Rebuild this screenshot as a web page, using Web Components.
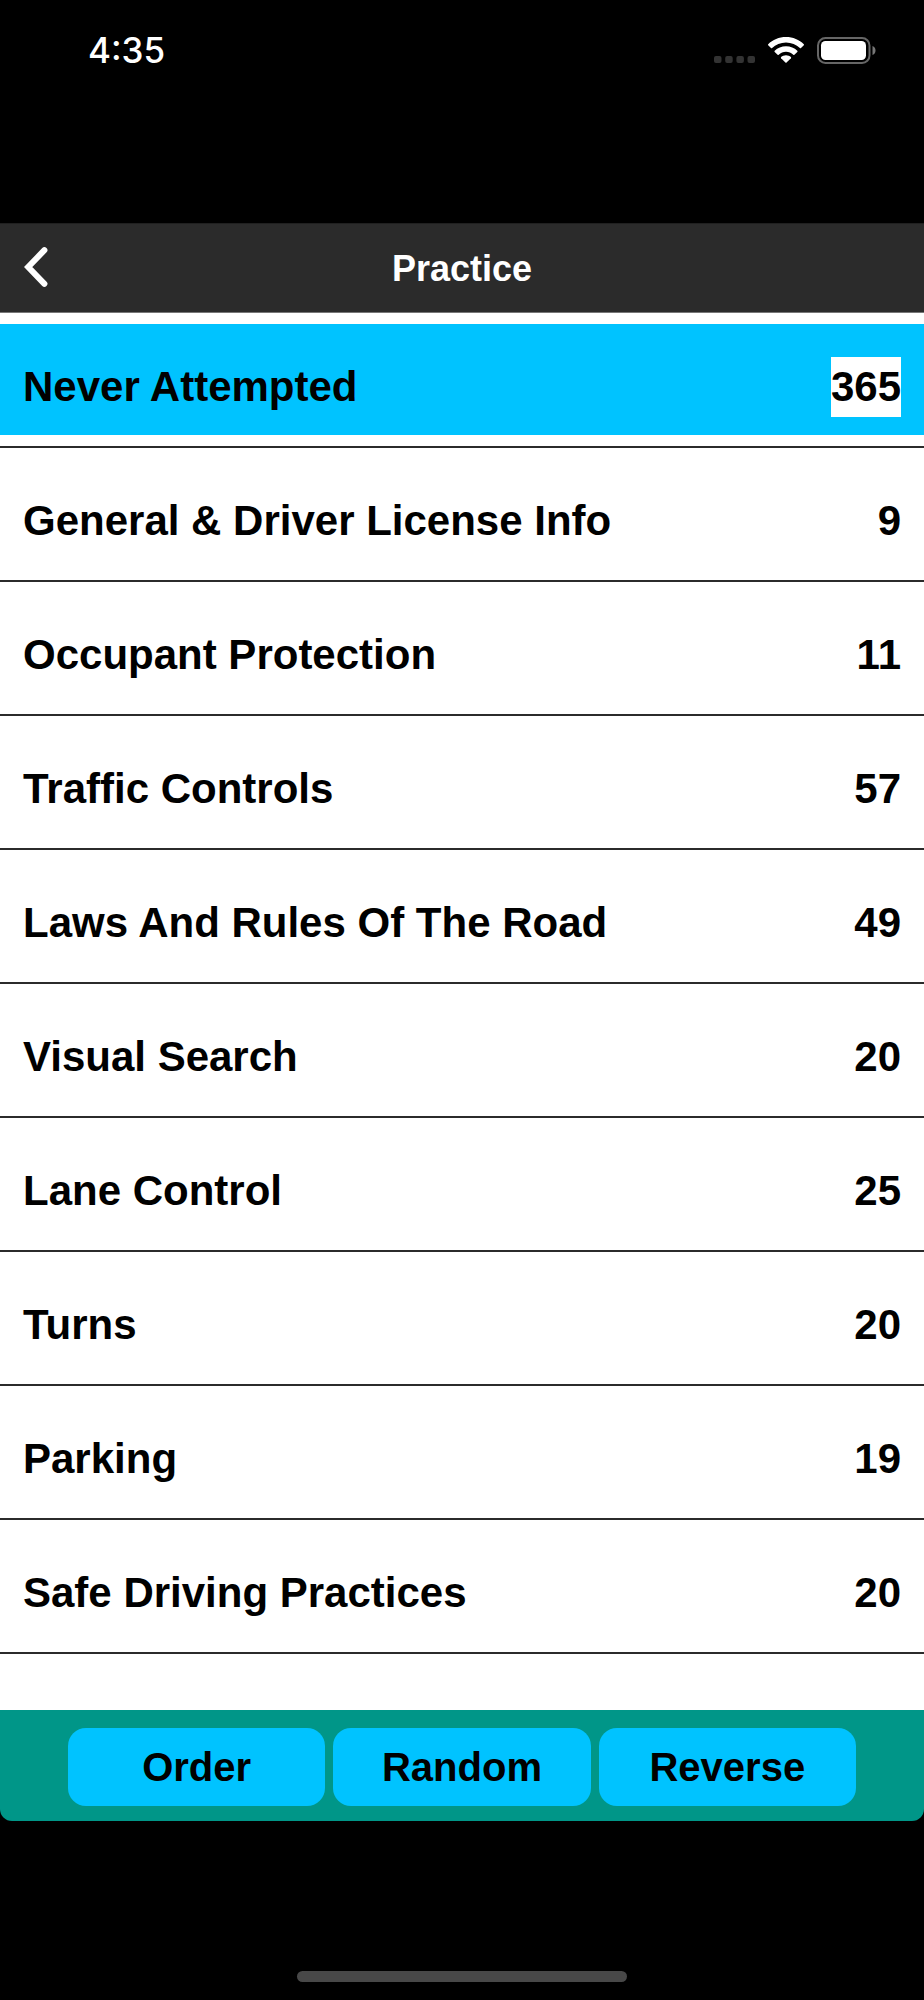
<!DOCTYPE html>
<html lang="en">
<head>
<meta charset="utf-8">
<meta name="viewport" content="width=device-width, initial-scale=1">
<title>Practice</title>
<style>
body {
    margin: 0;
    background-color: black;
    font-family: "Liberation Sans", Arial, sans-serif;
}
</style>
</head>
<body>
<practice-app></practice-app>

<script>
const statusTemplate = document.createElement("template");
statusTemplate.innerHTML = `
<style>
:host {
    display: flex;
    justify-content: space-between;
    align-items: flex-start;
    height: 223px;
    padding: 30px 47px 0 88px;
    box-sizing: border-box;
    color: white;
    background-color: black;
}

time {
    font-family: Inter, sans-serif;
    font-size: 35px;
    font-weight: 500;
    line-height: 40px;
}

.icons {
    display: flex;
    gap: 13px;
    padding-top: 7px;
}

svg {
    display: block;
}
</style>
<time>4:35</time>
<div class="icons">
    <svg width="41" height="27" viewBox="0 0 41 27" fill="#333" aria-hidden="true">
        <rect x="0" y="19" width="7.5" height="7" rx="2"/>
        <rect x="11.2" y="19" width="7.5" height="7" rx="2"/>
        <rect x="22.4" y="19" width="7.5" height="7" rx="2"/>
        <rect x="33.5" y="19" width="7.5" height="7" rx="2"/>
    </svg>
    <svg width="36" height="27" viewBox="0 0 36 27" fill="white" aria-hidden="true">
        <path d="M18 0C11 0 4.700 2.700 .2 7.200Q-.3 7.800 .2 8.300L3 11.100Q3.500 11.600 4.100 11.100C7.700 7.600 12.600 5.500 18 5.500S28.300 7.600 31.900 11.100Q32.500 11.600 33 11.100L35.800 8.300Q36.300 7.800 35.800 7.200C31.300 2.700 25 0 18 0Z"/>
        <path d="M18 9.200C13.600 9.200 9.600 10.900 6.700 13.700Q6.100 14.300 6.700 14.900L9.600 17.700Q10.100 18.200 10.700 17.700C12.700 15.900 15.200 14.800 18 14.800S23.300 15.900 25.300 17.700Q25.900 18.200 26.400 17.700L29.300 14.900Q29.900 14.300 29.300 13.700C26.400 10.900 22.400 9.200 18 9.200Z"/>
        <path d="M18 18.300C16.100 18.300 14.400 19 13.100 20.100Q12.600 20.600 13.100 21.200L17.400 25.500Q18 26.100 18.600 25.500L22.900 21.200Q23.400 20.600 22.900 20.100C21.600 19 19.900 18.300 18 18.300Z"/>
    </svg>
    <svg width="60" height="27" viewBox="0 0 60 27" aria-hidden="true">
        <rect x="1" y="1" width="51.500" height="25" rx="7.500" fill="none" stroke="#666" stroke-width="2"/>
        <rect x="4" y="4" width="45" height="19" rx="4.500" fill="white"/>
        <path d="M55.500 9C57.600 9.600 58.500 11.400 58.500 13.500S57.600 17.400 55.500 18Z" fill="#777"/>
    </svg>
</div>
`;

class StatusBar extends HTMLElement {
  constructor() {
    super();
    this.attachShadow({ mode: "open" }).append(
      statusTemplate.content.cloneNode(true)
    );
  }
}

customElements.define("status-bar", StatusBar);

const headerTemplate = document.createElement("template");
headerTemplate.innerHTML = `
<style>
:host {
    display: grid;
    grid-template-columns: 72px 1fr 72px;
    align-items: center;
    height: 90px;
    box-sizing: border-box;
    border-top: 1px solid #202020;
    border-bottom: 1px solid #777;
    color: white;
    background-color: #2b2b2b;
}

button {
    display: flex;
    align-items: center;
    height: 100%;
    padding: 0 0 2px 24px;
    border: 0;
    background: none;
    color: inherit;
}

h1 {
    margin: 0;
    padding-top: 2px;
    font-size: 36px;
    font-weight: 700;
    line-height: 40px;
    text-align: center;
}
</style>
<button type="button" aria-label="Back">
    <svg width="24" height="40" viewBox="0 0 24 40" fill="none" stroke="white" stroke-width="6" stroke-linecap="round" aria-hidden="true">
        <path d="M20.400 3.200L4.200 20L20.400 36.800"/>
    </svg>
</button>
<h1><slot></slot></h1>
`;

class NavHeader extends HTMLElement {
  constructor() {
    super();
    this.attachShadow({ mode: "open" }).append(
      headerTemplate.content.cloneNode(true)
    );
  }
}

customElements.define("nav-header", NavHeader);

const rowTemplate = document.createElement("template");
rowTemplate.innerHTML = `
<style>
:host {
    display: block;
    padding: 10px 0 11px;
    border-bottom: 2px solid #2b2b2b;
    background-color: white;
}

button {
    display: flex;
    justify-content: space-between;
    width: 100%;
    padding: 33px 23px 18px;
    border: 0;
    background-color: white;
    color: black;
    font: 700 42px/60px "Liberation Sans", Arial, sans-serif;
    text-align: left;
}

.count {
    background-color: white;
}

:host([selected]) button {
    background-color: #00c3ff;
}
</style>
<button type="button">
    <span><slot></slot></span>
    <span class="count"></span>
</button>
`;

class TopicRow extends HTMLElement {
  constructor() {
    super();
    this.attachShadow({ mode: "open" }).append(
      rowTemplate.content.cloneNode(true)
    );
  }

  connectedCallback() {
    this.shadowRoot.querySelector(".count").textContent =
      this.getAttribute("count");
  }
}

customElements.define("topic-row", TopicRow);

const actionsTemplate = document.createElement("template");
actionsTemplate.innerHTML = `
<style>
:host {
    display: grid;
    grid-template-columns: repeat(3, 1fr);
    gap: 8px;
    padding: 18px 68px 15px;
    border-radius: 0 0 12px 12px;
    background-color: #009688;
}

button {
    height: 78px;
    padding: 0;
    border: 0;
    border-radius: 18px;
    background-color: #00c3ff;
    color: black;
    font: 700 40px/48px "Liberation Sans", Arial, sans-serif;
}
</style>
<button type="button">Order</button>
<button type="button">Random</button>
<button type="button">Reverse</button>
`;

class PracticeActions extends HTMLElement {
  constructor() {
    super();
    this.attachShadow({ mode: "open" }).append(
      actionsTemplate.content.cloneNode(true)
    );
  }
}

customElements.define("practice-actions", PracticeActions);

const appTemplate = document.createElement("template");
appTemplate.innerHTML = `
<style>
:host {
    display: flex;
    flex-direction: column;
    min-height: 100vh;
}

main {
    flex: 1;
    display: flex;
    flex-direction: column;
}

.topics {
    flex: 1;
    padding-top: 1px;
    background-color: white;
}

footer {
    display: flex;
    justify-content: center;
    align-items: flex-end;
    height: 179px;
    padding-bottom: 18px;
    box-sizing: border-box;
}

.indicator {
    width: 330px;
    height: 11px;
    border-radius: 6px;
    background-color: #484848;
}
</style>
<status-bar></status-bar>
<main>
    <nav-header>Practice</nav-header>
    <div class="topics"></div>
    <practice-actions></practice-actions>
</main>
<footer><div class="indicator"></div></footer>
`;

const topics = [
  { title: "Never Attempted", count: 365, selected: true },
  { title: "General & Driver License Info", count: 9 },
  { title: "Occupant Protection", count: 11 },
  { title: "Traffic Controls", count: 57 },
  { title: "Laws And Rules Of The Road", count: 49 },
  { title: "Visual Search", count: 20 },
  { title: "Lane Control", count: 25 },
  { title: "Turns", count: 20 },
  { title: "Parking", count: 19 },
  { title: "Safe Driving Practices", count: 20 },
];

class PracticeApp extends HTMLElement {
  constructor() {
    super();
    this.attachShadow({ mode: "open" }).append(
      appTemplate.content.cloneNode(true)
    );
    this.renderTopics();
  }

  renderTopics() {
    const list = this.shadowRoot.querySelector(".topics");

    topics.forEach((topic) => {
      const row = document.createElement("topic-row");
      row.textContent = topic.title;
      row.setAttribute("count", topic.count);
      row.toggleAttribute("selected", Boolean(topic.selected));
      list.appendChild(row);
    });
  }
}

customElements.define("practice-app", PracticeApp);
</script>
</body>
</html>
